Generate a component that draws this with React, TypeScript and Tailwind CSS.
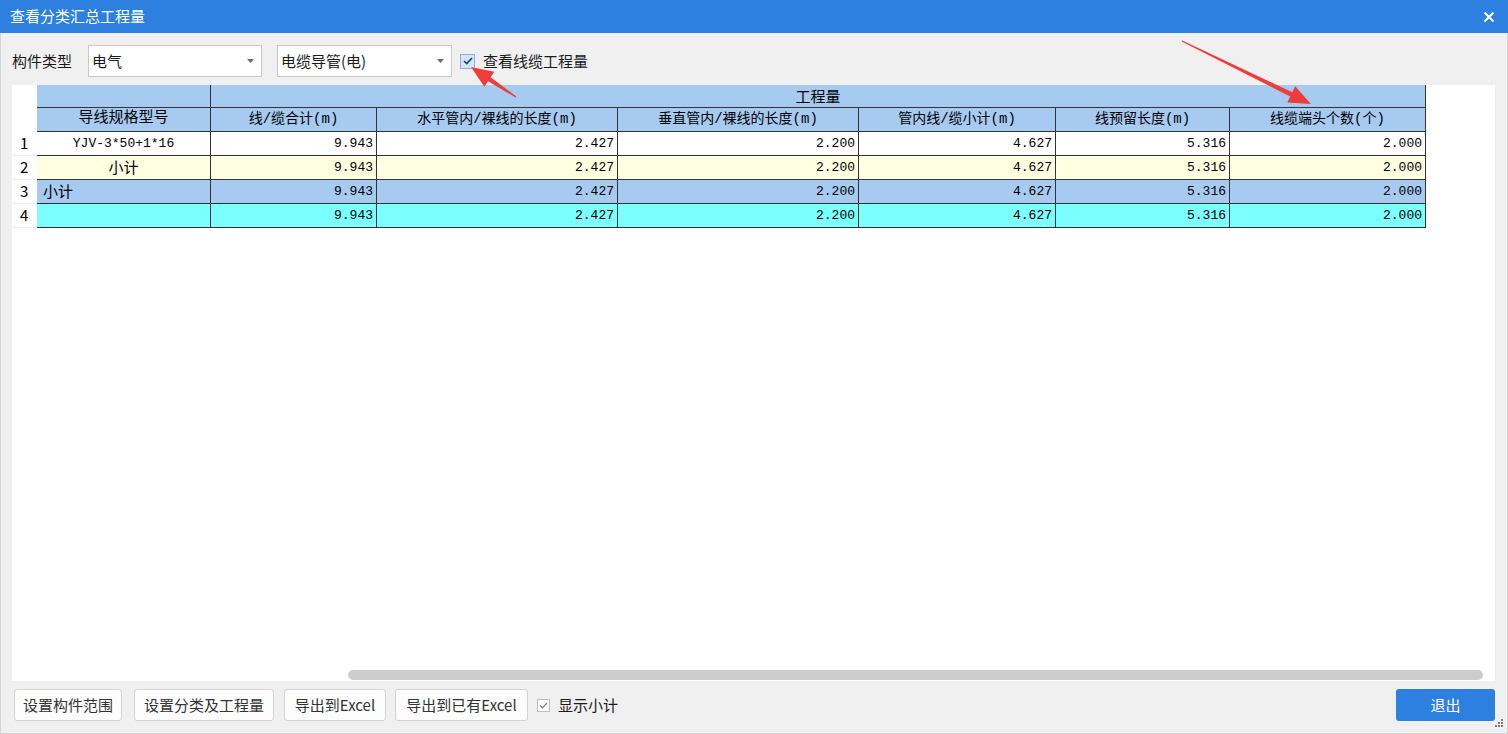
import React from 'react';

type Row = {
  no: string;
  name: string;
  align: 'center' | 'left';
  bg: string;
  values: string[];
};

const cols = [174, 166, 241, 241, 197, 174, 196];

const headers = [
  '线/缆合计(m)',
  '水平管内/裸线的长度(m)',
  '垂直管内/裸线的长度(m)',
  '管内线/缆小计(m)',
  '线预留长度(m)',
  '线缆端头个数(个)',
];

const values = ['9.943', '2.427', '2.200', '4.627', '5.316', '2.000'];

const rows: Row[] = [
  { no: '1', name: 'YJV-3*50+1*16', align: 'center', bg: 'bg-white', values },
  { no: '2', name: '小计', align: 'center', bg: 'bg-[#ffffe1]', values },
  { no: '3', name: '小计', align: 'left', bg: 'bg-[#a6caf0]', values },
  { no: '4', name: '', align: 'center', bg: 'bg-[#7bffff]', values },
];

const ui = { fontFamily: '"Noto Sans CJK SC", "Noto Sans", sans-serif' };
const grid = { fontFamily: '"Liberation Mono", "Noto Sans CJK SC", monospace' };

// red annotation arrow: thin tail widening toward a triangle head
function arrowPoints(x1: number, y1: number, x2: number, y2: number) {
  const dx = x2 - x1;
  const dy = y2 - y1;
  const len = Math.hypot(dx, dy);
  const ux = dx / len;
  const uy = dy / len;
  const nx = -uy;
  const ny = ux;
  const head = 22;
  const hw = 9;
  const sw = 2.4;
  const bx = x2 - ux * head;
  const by = y2 - uy * head;
  const p = (x: number, y: number) => `${x.toFixed(1)},${y.toFixed(1)}`;
  return [
    p(x1 + nx * 0.6, y1 + ny * 0.6),
    p(bx + nx * sw, by + ny * sw),
    p(bx + nx * hw, by + ny * hw),
    p(x2, y2),
    p(bx - nx * hw, by - ny * hw),
    p(bx - nx * sw, by - ny * sw),
    p(x1 - nx * 0.6, y1 - ny * 0.6),
  ].join(' ');
}

const Select = ({ label, width }: { label: string; width: string }) => (
  <div className={`flex h-[32px] ${width} items-center justify-between border border-[#c9c9c9] bg-white pl-[3px] pr-[7px] text-[15px] text-[#1a1a1a]`}>
    <span>{label}</span>
    <svg width="7" height="4" viewBox="0 0 7 4">
      <path d="M0 0 L7 0 L3.5 4 Z" fill="#6b6b6b" />
    </svg>
  </div>
);

const Button = ({ label, width }: { label: string; width: string }) => (
  <button className={`h-[32px] ${width} rounded-[3px] border border-[#d3d3d3] bg-[#fdfdfd] text-[15px] text-[#333]`}>
    {label}
  </button>
);

export default function App() {
  return (
    <div className="relative flex h-[734px] w-[1508px] flex-col bg-[#f0f0f0]" style={ui}>
      <div className="flex h-[33px] shrink-0 items-center justify-between bg-[#2d80e0] pl-[10px] pr-[13px] text-white">
        <span className="text-[15px]">查看分类汇总工程量</span>
        <svg width="12" height="12" viewBox="0 0 12 12">
          <path d="M1.5 1.5 L10.5 10.5 M10.5 1.5 L1.5 10.5" stroke="white" strokeWidth="2" />
        </svg>
      </div>

      <div className="flex flex-1 flex-col border-x border-b border-[#d4d4d4] pl-[11px] pr-[12px]">
        <div className="mt-[12px] flex h-[32px] items-center text-[15px] text-[#1a1a1a]">
          <span className="w-[76px]">构件类型</span>
          <Select label="电气" width="w-[174px]" />
          <div className="w-[15px]" />
          <Select label="电缆导管(电)" width="w-[175px]" />
          <div className="ml-[8px] flex h-[15px] w-[15px] items-center justify-center border border-[#8cb0dc] bg-[#d3e5f8]">
            <svg width="10" height="8" viewBox="0 0 10 8">
              <path d="M1 4 L3.8 6.6 L9 1" fill="none" stroke="#1f3f78" strokeWidth="1.6" />
            </svg>
          </div>
          <span className="ml-[8px]">查看线缆工程量</span>
        </div>

        <div className="mt-[8px] flex h-[596px] flex-col bg-white">
          <div className="text-[14px] text-black" style={grid}>
            <div className="flex h-[23px]">
              <div className="w-[25px]" />
              <div className="w-[174px] border-r border-b border-[#333] bg-[#a6caf0]" />
              <div className="flex w-[1215px] items-center justify-center border-r border-b border-[#333] bg-[#a6caf0] text-[15px]" style={ui}>
                工程量
              </div>
            </div>
            <div className="flex h-[24px]">
              <div className="w-[25px]" />
              <div className="flex w-[174px] items-center justify-center border-r border-b border-[#333] bg-[#a6caf0] text-[15px]">
                导线规格型号
              </div>
              {headers.map((h, i) => (
                <div
                  key={h}
                  className="flex items-center justify-center border-r border-b border-[#333] bg-[#a6caf0]"
                  style={{ width: cols[i + 1] }}
                >
                  {h}
                </div>
              ))}
            </div>
            {rows.map(r => (
              <div key={r.no} className="flex h-[24px]">
                <div className="flex w-[25px] items-center border-b border-[#ececec] pl-[8px] text-[15px]" style={ui}>
                  {r.no}
                </div>
                <div
                  className={`flex w-[174px] items-center border-r border-b border-[#333] ${r.bg} ${
                    r.align === 'left' ? 'justify-start pl-[6px]' : 'justify-center'
                  } ${r.name === '小计' ? 'text-[15px]' : 'text-[13px]'}`}
                  style={r.name === '小计' ? ui : grid}
                >
                  {r.name}
                </div>
                {r.values.map((v, i) => (
                  <div
                    key={i}
                    className={`flex items-center justify-end border-r border-b border-[#333] pr-[3px] text-[13px] ${r.bg}`}
                    style={{ width: cols[i + 1] }}
                  >
                    {v}
                  </div>
                ))}
              </div>
            ))}
          </div>
          <div className="flex-1" />
          <div className="mb-[1px] flex h-[10px] pl-[336px] pr-[12px]">
            <div className="h-[10px] flex-1 rounded-full bg-[#cdcdcd]" />
          </div>
        </div>

        <div className="mt-[8px] flex items-center pl-[2px]">
          <Button label="设置构件范围" width="w-[108px]" />
          <div className="w-[12px]" />
          <Button label="设置分类及工程量" width="w-[140px]" />
          <div className="w-[10px]" />
          <Button label="导出到Excel" width="w-[102px]" />
          <div className="w-[9px]" />
          <Button label="导出到已有Excel" width="w-[133px]" />
          <div className="ml-[9px] flex h-[13px] w-[13px] items-center justify-center border border-[#bdbdbd] bg-white">
            <svg width="9" height="7" viewBox="0 0 9 7">
              <path d="M1 3.5 L3.4 5.8 L8 1" fill="none" stroke="#7a7a7a" strokeWidth="1.2" />
            </svg>
          </div>
          <span className="ml-[8px] text-[15px] text-[#1a1a1a]">显示小计</span>
          <div className="flex-1" />
          <button className="h-[32px] w-[99px] rounded-[3px] bg-[#2d80e0] text-[15px] text-white">退出</button>
        </div>
      </div>

      <svg className="absolute bottom-[6px] right-[4px]" width="10" height="10" viewBox="0 0 10 10">
        <rect x="7" y="1" width="2" height="2" fill="#7a7a7a" />
        <rect x="4" y="4" width="2" height="2" fill="#7a7a7a" />
        <rect x="7" y="4" width="2" height="2" fill="#7a7a7a" />
        <rect x="1" y="7" width="2" height="2" fill="#7a7a7a" />
        <rect x="4" y="7" width="2" height="2" fill="#7a7a7a" />
        <rect x="7" y="7" width="2" height="2" fill="#7a7a7a" />
      </svg>

      <svg className="pointer-events-none absolute left-0 top-0" width="1508" height="734">
        <polygon points={arrowPoints(516, 97, 471, 67)} fill="#ee3d3a" />
        <polygon points={arrowPoints(1182, 41, 1311, 104)} fill="#ee3d3a" />
      </svg>
    </div>
  );
}
